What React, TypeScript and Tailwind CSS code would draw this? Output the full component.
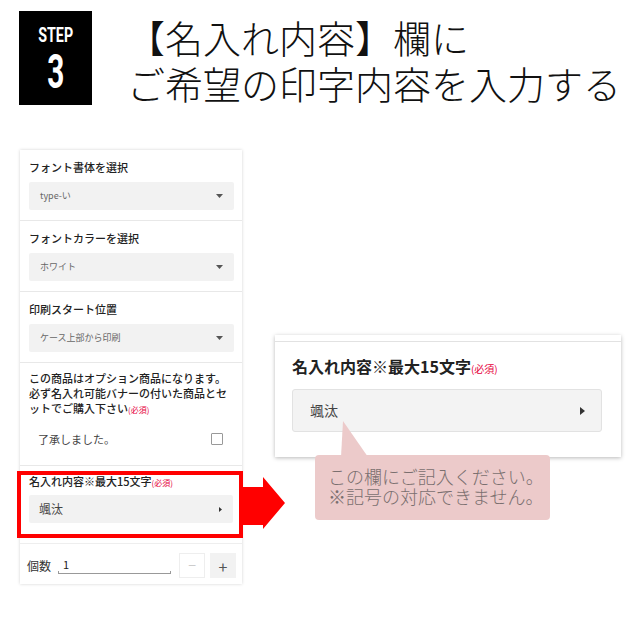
const jp = "font-['Noto_Sans_CJK_JP','Noto_Sans',sans-serif]"

function DownCaret() {
  return (
    <svg width="7" height="4" viewBox="0 0 7 4" className="shrink-0">
      <path d="M0 0h7L3.5 4z" fill="#555" />
    </svg>
  )
}

function RightCaret({ big }: { big?: boolean }) {
  return big ? (
    <svg width="5" height="8" viewBox="0 0 5 8" className="shrink-0">
      <path d="M0 0l5 4-5 4z" fill="#333" />
    </svg>
  ) : (
    <svg width="3" height="5" viewBox="0 0 3 5" className="shrink-0">
      <path d="M0 0l3 2.5L0 5z" fill="#333" />
    </svg>
  )
}

function Required({ size }: { size: string }) {
  return <span className={`${size} text-[#e6003c] font-normal`}>(必須)</span>
}

function SelectSection({ label, value }: { label: string; value: string }) {
  return (
    <div className="pt-[9px] pb-[10px] pl-[9px] pr-[8px] border-b border-[#e8e8e8]">
      <div className="text-[11px] leading-[16px] font-medium text-[#222]">{label}</div>
      <div className="mt-[7px] h-[28px] bg-[#f2f2f2] rounded-[2px] flex items-center justify-between pl-[11px] pr-[11px]">
        <span className="text-[9px] text-[#666]">{value}</span>
        <DownCaret />
      </div>
    </div>
  )
}

export default function App() {
  return (
    <div className={`w-[640px] h-[640px] bg-white relative overflow-hidden ${jp}`}>
      {/* header */}
      <div className="flex h-[105px] pt-[11px] pl-[19px]">
        <div className="w-[73px] h-[94px] bg-black flex flex-col items-center text-white font-['Roboto',sans-serif] font-bold">
          <div className="mt-[14px] text-[21px] leading-[21px] scale-x-[0.68]">STEP</div>
          <div className="mt-[2px] text-[48px] leading-[48px] scale-x-[0.62]">3</div>
        </div>
        <div className="ml-[35px] mt-[3px] text-[38px] leading-[46px] font-light text-[#111] font-['Noto_Sans_CJK_JP_Light','Noto_Sans_CJK_JP',sans-serif]">
          <div>【名入れ内容】欄に</div>
          <div>ご希望の印字内容を入力する</div>
        </div>
      </div>

      {/* body */}
      <div className="flex mt-[45px] relative">
        <div className="ml-[20px] w-[222px] bg-white shadow-[0_0_3px_rgba(0,0,0,0.18)]">
          <SelectSection label="フォント書体を選択" value="type-い" />
          <SelectSection label="フォントカラーを選択" value="ホワイト" />
          <SelectSection label="印刷スタート位置" value="ケース上部から印刷" />

          <div className="pt-[8px] pb-[16px] pl-[9px] pr-[8px] border-b border-[#e8e8e8]">
            <div className="text-[11px] leading-[15px] font-medium text-[#222]">
              この商品はオプション商品になります。必ず名入れ可能バナーの付いた商品とセットでご購入下さい
              <Required size="text-[8px]" />
            </div>
            <div className="mt-[12px] h-[20px] flex items-center justify-between pl-[9px] pr-[11px]">
              <span className="text-[11px] text-[#444]">了承しました。</span>
              <span className="w-[12px] h-[12px] border border-[#999] rounded-[1px] bg-white" />
            </div>
          </div>

          <div className="pt-[5px] pb-[5px] border-b border-[#eee]">
            <div className="ml-[-3px] mr-[-1px] border-4 border-[#ff0000] pt-0 pb-[11px] pl-[8px] pr-[6px]">
              <div className="text-[11px] leading-[13px] font-medium text-[#222]">
                名入れ内容※最大15文字
                <Required size="text-[8px]" />
              </div>
              <div className="mt-[6px] h-[28px] bg-[#f2f2f2] rounded-[2px] flex items-center justify-between pl-[10px] pr-[11px]">
                <span className="text-[12px] text-[#444]">颯汰</span>
                <RightCaret />
              </div>
            </div>
          </div>

          <div className="pt-[9px] pb-[6px] pl-[7px] pr-[7px] flex items-center">
            <span className="shrink-0 whitespace-nowrap text-[12px] text-[#333]">個数</span>
            <div className="ml-[7px] w-[113px] shrink-0 flex flex-col">
              <span className="pl-[5px] text-[11px] leading-[13px] text-[#222]">1</span>
              <div className="h-[3px] border-x border-b border-[#999]" />
            </div>
            <div className="ml-[8px] shrink-0 w-[26px] h-[25px] border border-[#eee] bg-white flex items-center justify-center text-[14px] text-[#ccc]">
              −
            </div>
            <div className="ml-[5px] shrink-0 w-[26px] h-[25px] bg-[#f2f2f2] flex items-center justify-center text-[16px] text-[#555]">
              +
            </div>
          </div>
        </div>

        {/* red arrow */}
        <svg
          className="absolute left-[239px] top-[326px]"
          width="48"
          height="58"
          viewBox="0 0 48 58"
        >
          <path d="M0 11h24V1l22 26-22 26V49H0z" fill="#ff0000" />
        </svg>

        {/* enlarged field */}
        <div className="ml-[33px] mt-[185px] relative">
          <div className="w-[346px] bg-white shadow-[0_1px_4px_rgba(0,0,0,0.28)]">
            <div className="h-[7px] border-b border-[#e2e2e2]" />
            <div className="pt-[13px] pb-[25px] pl-[17px] pr-[19px]">
              <div className="text-[16px] leading-[22px] font-bold text-[#222]">
                名入れ内容※最大15文字
                <Required size="text-[10px]" />
              </div>
              <div className="mt-[9px] h-[43px] bg-[#f3f3f3] border border-[#e2e2e2] rounded-[3px] flex items-center justify-between pl-[17px] pr-[16px]">
                <span className="text-[14px] text-[#444]">颯汰</span>
                <RightCaret big />
              </div>
            </div>
          </div>

          {/* tooltip */}
          <svg className="absolute left-[66px] top-[86px]" width="28" height="36" viewBox="0 0 28 36">
            <path d="M2 0L0 36h27z" fill="#eccaca" />
          </svg>
          <div className="absolute left-[40px] top-[120px] w-[235px] h-[65px] rounded-[4px] bg-[#eccaca] pt-[11px] pl-[13px] text-[18px] leading-[20px] font-light text-[#7a6f6f]">
            <div>この欄にご記入ください。</div>
            <div>※記号の対応できません。</div>
          </div>
        </div>
      </div>
    </div>
  )
}
